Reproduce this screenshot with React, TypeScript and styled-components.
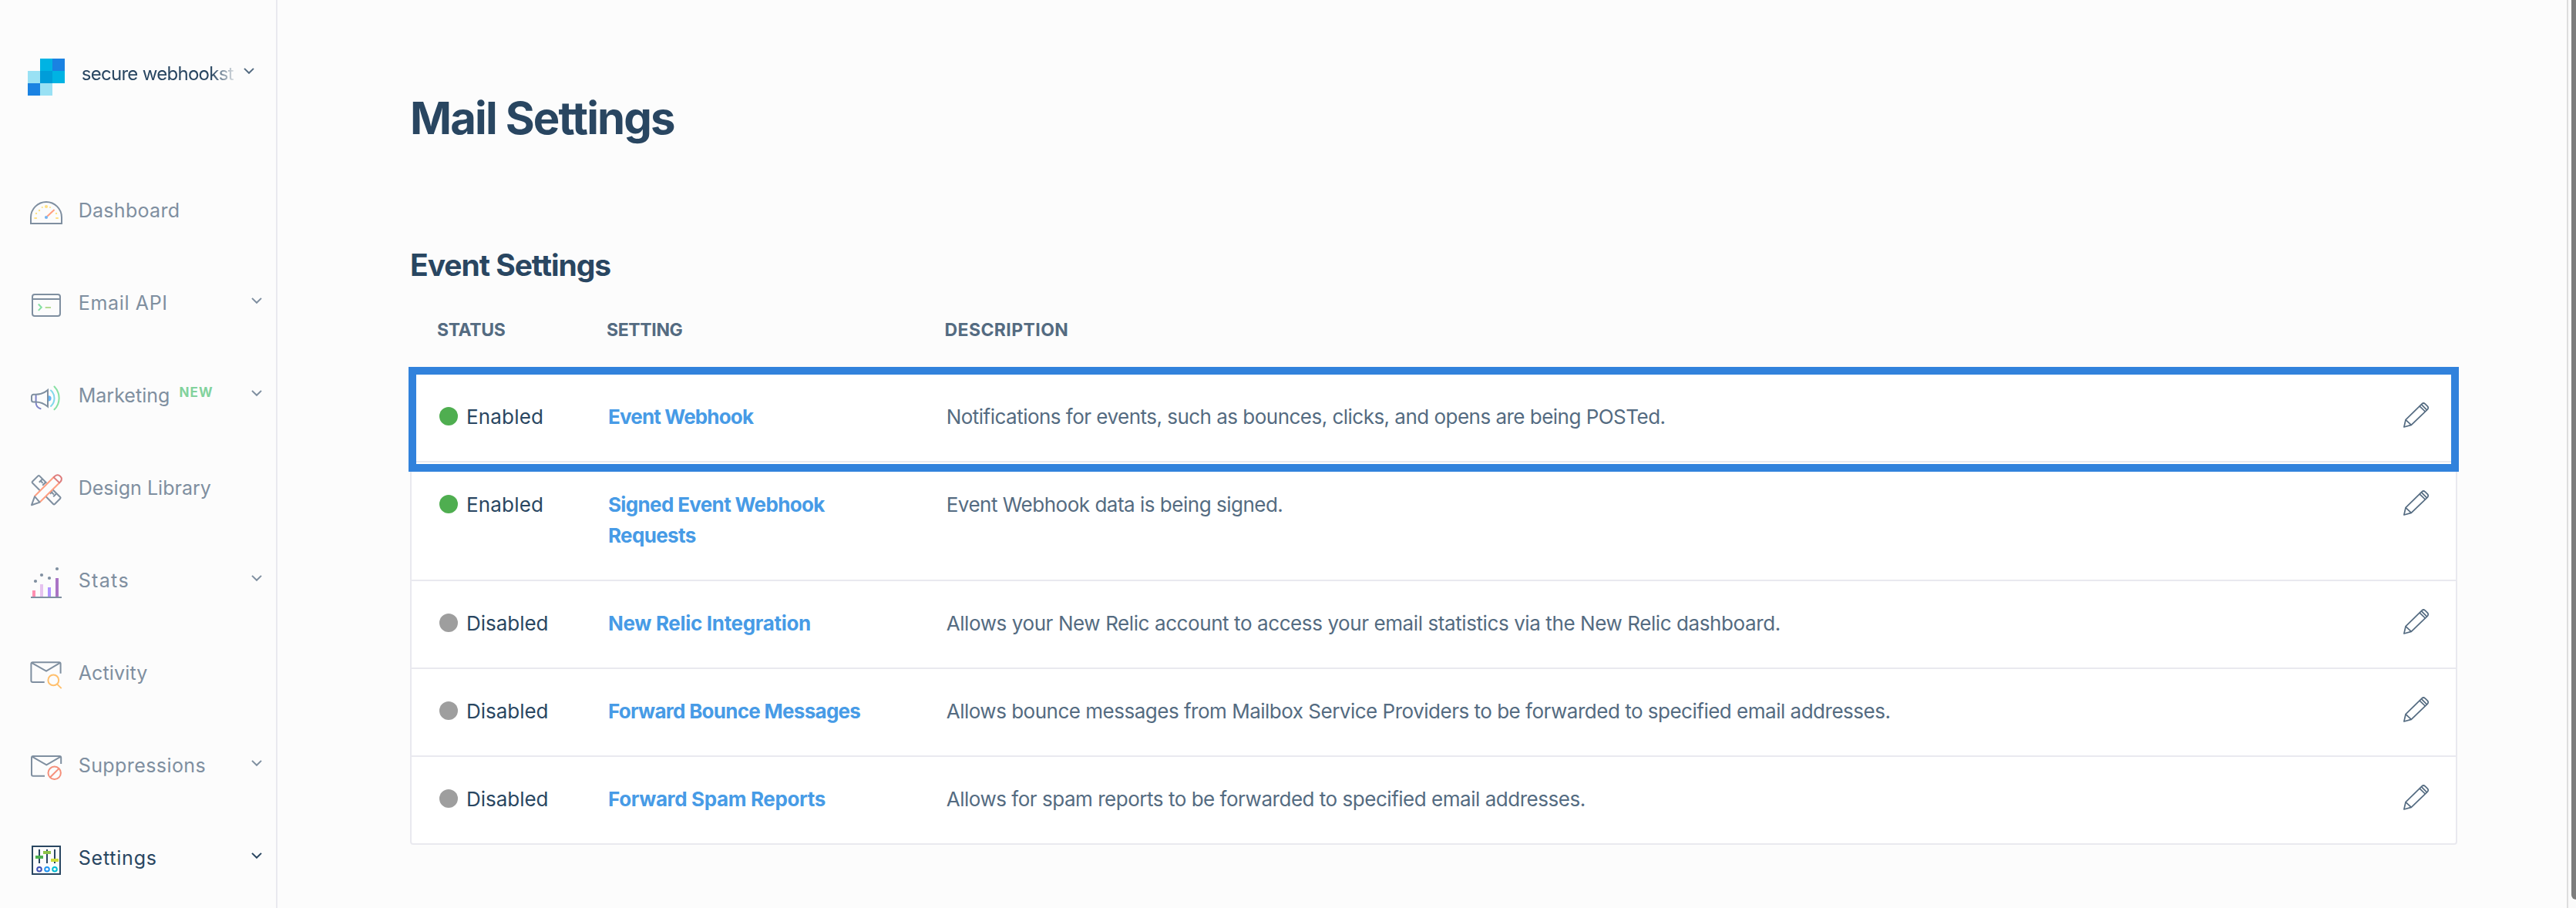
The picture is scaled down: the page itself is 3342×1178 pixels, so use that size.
import React from "react";
import styled, { createGlobalStyle, css } from "styled-components";

const GlobalStyle = createGlobalStyle`
  *, *::before, *::after { box-sizing: border-box; }
  body {
    margin: 0;
    background: #fcfcfc;
    font-family: Inter, "Liberation Sans", sans-serif;
    overflow: hidden;
  }
`;

const navy = "#294661";
const slate = "#546b81";
const muted = "#7f8fa0";
const line = "#e9e9ef";

const Page = styled.div`
  display: flex;
  height: 1178px;
  overflow: hidden;
`;

/* ---------- sidebar ---------- */

const Sidebar = styled.aside`
  width: 360px;
  flex: none;
  border-right: 2px solid ${line};
  display: flex;
  flex-direction: column;
`;

const Brand = styled.div`
  height: 213px;
  flex: none;
  display: flex;
  align-items: flex-start;
  padding: 76px 0 0 36px;
`;

const BrandName = styled.div`
  width: 210.3px;
  margin: 5px 0 0 21.7px;
  font-size: 24px;
  line-height: 29px;
  letter-spacing: -0.71px;
  color: ${navy};
  white-space: nowrap;
  mask-image: linear-gradient(to right, #000 168px, transparent 203px);
`;

const BrandArrow = styled.div`
  display: flex;
  padding-top: 12px;
`;

const Nav = styled.nav`
  display: flex;
  flex-direction: column;
`;

const NavItem = styled.a<{ $active?: boolean }>`
  height: 120px;
  display: flex;
  align-items: center;
  padding: 0 18px 0 36px;
  color: ${(p) => (p.$active ? navy : muted)};
`;

const NavIcon = styled.svg`
  width: 48px;
  height: 48px;
  flex: none;
  margin-top: 6px;
  fill: none;
  stroke: currentColor;
  stroke-width: 2;
`;

const NavLabel = styled.span<{ $track: number }>`
  margin-left: 17.7px;
  font-size: 25px;
  line-height: 30px;
  letter-spacing: ${(p) => p.$track}px;
  white-space: nowrap;
`;

const NewTag = styled.span`
  margin: 0 0 8px 12px;
  font-size: 17px;
  line-height: 20px;
  font-weight: 700;
  letter-spacing: 1.2px;
  color: #82d29c;
`;

const NavArrow = styled.span`
  display: flex;
  margin-left: auto;
  padding-bottom: 6px;
`;

/* ---------- content ---------- */

const Main = styled.main`
  flex: 1;
  padding: 118px 142px 0 172px;
`;

const PageTitle = styled.h1`
  margin: 0 0 132px;
  font-size: 58px;
  line-height: 70px;
  font-weight: 700;
  letter-spacing: -1.85px;
  color: ${navy};
`;

const SectionTitle = styled.h2`
  margin: 0 0 47px;
  font-size: 39px;
  line-height: 47px;
  font-weight: 700;
  letter-spacing: -1.04px;
  color: ${navy};
`;

const HeadRow = styled.div`
  display: grid;
  grid-template-columns: 220px 438.5px 1fr;
  padding: 0 35px;
  margin-bottom: 42px;
`;

const HeadCell = styled.div<{ $track: number }>`
  font-size: 23px;
  line-height: 28px;
  font-weight: 700;
  letter-spacing: ${(p) => p.$track}px;
  color: ${slate};
`;

const Table = styled.div`
  border: 2px solid ${line};
  border-radius: 4px;
  background: #fff;
`;

const Row = styled.div<{ $highlight?: boolean; $last?: boolean }>`
  position: relative;
  display: grid;
  grid-template-columns: 219px 438.7px 1fr 36px;
  align-items: start;
  padding: 34.5px 34px 37.5px 36px;
  ${(p) => !p.$last && css`border-bottom: 2px solid ${line};`}
  ${(p) =>
    p.$highlight &&
    css`
      &::after {
        content: "";
        position: absolute;
        z-index: 1;
        top: -10px;
        left: -4px;
        right: -4px;
        height: 136px;
        border: 10px solid #3182dc;
      }
    `}
`;

const Status = styled.div<{ $track: number }>`
  display: flex;
  align-items: center;
  font-size: 26px;
  line-height: 40px;
  letter-spacing: ${(p) => p.$track}px;
  color: ${navy};
`;

const Dot = styled.span<{ $on: boolean }>`
  width: 24px;
  height: 24px;
  margin: 0 11px 1px 0;
  border-radius: 50%;
  background: ${(p) => (p.$on ? "#4fae50" : "#9e9e9e")};
`;

const SettingLink = styled.a<{ $track: number }>`
  max-width: 360px;
  font-size: 26px;
  line-height: 40px;
  font-weight: 700;
  letter-spacing: ${(p) => p.$track}px;
  color: #479be6;
`;

const Description = styled.div<{ $track: number }>`
  font-size: 26px;
  line-height: 40px;
  letter-spacing: ${(p) => p.$track}px;
  color: ${slate};
  white-space: nowrap;
`;

const EditIcon = styled.svg`
  width: 36px;
  height: 36px;
  margin-top: -0.5px;
  fill: none;
  stroke: ${slate};
  stroke-width: 1.7;
  stroke-linejoin: round;
`;

const ScrollTrack = styled.div`
  width: 12px;
  flex: none;
  padding-left: 4px;
  border-left: 2px solid #dedede;
  background: #fafafa;
`;

const ScrollThumb = styled.div`
  height: 1167px;
  background: #7d7d7d;
  border-bottom-left-radius: 7px;
`;

/* ---------- drawings ---------- */

const Logo = () => (
  <svg width="48" height="48" shapeRendering="crispEdges">
    <path fill="#00b3e3" d="M16 0h16v16H16zM32 16h16v16H32z" />
    <path fill="#1a82e2" d="M32 0h16v16H32zM0 32h16v16H0z" />
    <path fill="#99e1f4" d="M0 16h16v16H0zM16 32h16v16H16z" />
    <path fill="#009dd9" d="M16 16h16v16H16z" />
  </svg>
);

const Chevron = ({ color = "currentColor" }: { color?: string }) => (
  <svg width="14" height="8" fill="none" stroke={color} strokeWidth="2">
    <path d="M1 .9l6 5.9 6-5.9" />
  </svg>
);

const DashboardIcon = () => (
  <NavIcon>
    <path d="M4 38V30a20 20 0 0 1 40 0v8z" />
    <g fill="#ffe082" stroke="none">
      <circle cx="24" cy="16" r="2.1" />
      <circle cx="18.8" cy="17" r="1.1" />
      <circle cx="29" cy="17" r="1.1" />
      <circle cx="15" cy="21" r="1.2" />
      <circle cx="11" cy="24.9" r="1.2" />
      <circle cx="37" cy="24.9" r="1.2" />
      <rect x="8.2" y="30" width="4" height="2" rx="1" />
      <rect x="36" y="30" width="4" height="2" rx="1" />
    </g>
    <path stroke="#ff9e80" d="M25.2 28.8L34.6 20" />
    <circle cx="24" cy="30" r="2.1" fill="#75b4f0" stroke="none" />
  </NavIcon>
);

const ApiIcon = () => (
  <NavIcon>
    <rect x="6" y="10" width="36" height="28" rx="3" />
    <path d="M6 16h36" />
    <path stroke="#86e0a3" d="M13.8 22.5l4 4.2-4 4.2" />
    <path stroke="#b5dc93" d="M22.7 27H30" />
  </NavIcon>
);

const MarketingIcon = () => (
  <NavIcon strokeLinecap="round">
    <path stroke="#7e84c8" d="M10.6 20.5V30c0 4 2.4 7 6 8.2" />
    <path d="M26 14v21.6c-4.5-3.8-9.5-6.2-15.4-6.2H7.500a2.500 2.500 0 0 1-2.500-2.500v-4.600a2.500 2.500 0 0 1 2.500-2.500h3.100C16.500 19.800 21.500 17.800 26 14z" />
    <path fill="#64b5f6" stroke="none" d="M27 21.200a3.600 3.600 0 0 1 0 7.200z" />
    <path stroke="#80d8ea" d="M30 14.500c6 5.400 6 15 0 20.400" />
    <path stroke="#86e0a3" d="M34.500 9.500c8.200 8.400 8.200 21.400 0 29.800" />
  </NavIcon>
);

const DesignIcon = () => (
  <NavIcon strokeLinejoin="round">
    <path d="M16 24.5L6 14.5q-.8-.9 0-1.700l7.400-7.400q.9-.8 1.800 0l9.200 9.300" />
    <path d="M14.800 13.800l4-4M17 11.800l2.500 3.200M19.200 17.800l4-4" />
    <path d="M23.400 32l9.800 10q.9.900 1.800 0l7.200-7.200q.8-.9 0-1.800l-9.800-9.700" />
    <path d="M28.800 28.800l3.400-3.200M31 27l3 2.500M33.200 32.400l3.600-3.600" />
    <path stroke="#ff9e80" d="M8.700 32L33.700 7M15.700 39.500l25.500-25.300" />
    <path stroke="#dd7b7b" d="M33.700 7.200l7.400 7.200 1-1.100c5-5.800-2.200-11.500-7.200-7.400z" />
    <path d="M9 32.200L5 43.200l10.600-3.600z" />
  </NavIcon>
);

const StatsIcon = () => (
  <NavIcon>
    <g stroke="none">
      <path fill="#ff8fb1" d="M6 34h4v8H6z" />
      <path fill="#e6c3ef" d="M16 26h4v16h-4z" />
      <path fill="#ae94ff" d="M26 30h4v12h-4z" />
      <path fill="#aa74c5" d="M36 18h4v24h-4z" />
      <g fill="currentColor">
        <path d="M4 42h40v2H4z" />
        <circle cx="10" cy="22" r="2.1" />
        <circle cx="18" cy="14" r="2.1" />
        <circle cx="28" cy="18" r="2.1" />
        <circle cx="38" cy="6" r="2.1" />
      </g>
    </g>
  </NavIcon>
);

const ActivityIcon = () => (
  <NavIcon>
    <path d="M21.7 33H6.400a2 2 0 0 1-2-2V9.200a2 2 0 0 1 2-2h34.200a2 2 0 0 1 2 2v12.600" />
    <path d="M5 7.800l19 10.700 18-10.700" />
    <circle cx="33.3" cy="30.4" r="6.9" stroke="#ffc06e" />
    <path stroke="#ffc06e" d="M38.200 35.600l5.500 5.500" />
  </NavIcon>
);

const SuppressionsIcon = () => (
  <NavIcon>
    <path d="M22 34.800H7a2 2 0 0 1-2-2V11a2 2 0 0 1 2-2h34.200a2 2 0 0 1 2 2v8" />
    <path d="M5.600 9.600l18.700 10.700L42.800 9.600" />
    <circle cx="34.7" cy="30.8" r="8.2" stroke="#f58f7a" />
    <path stroke="#f58f7a" d="M29 36.500l11.400-11.400" />
  </NavIcon>
);

const SettingsIcon = () => (
  <NavIcon>
    <rect x="6" y="6" width="36" height="36" />
    <path d="M15 10v18M25 10v18M35 10v18" />
    <g stroke="none">
      <path fill="#4caf50" d="M10 18h10v4H10z" />
      <path fill="#8bc34a" d="M20 12h10v4H20z" />
      <path fill="#cddc39" d="M30 22h10v4H30z" />
    </g>
    <circle cx="15" cy="35.7" r="2.8" stroke="#3f51b5" />
    <circle cx="25" cy="35.7" r="2.8" stroke="#2196f3" />
    <circle cx="35" cy="35.7" r="2.8" stroke="#00bcd4" />
  </NavIcon>
);

const Pencil = () => (
  <EditIcon>
    <path d="M5 24.700L26.200 3.800q1.900-1.600 3.900 0l3.300 3.300q1.700 2 0 4L12.300 31.400 2.900 34z" />
    <path d="M5 24.700l7.300 6.700M23 6.800l7.400 7.200M25.300 4.700l7.200 7.200" />
  </EditIcon>
);

/* ---------- data ---------- */

const navItems = [
  { label: "Dashboard", track: 0.3, Icon: DashboardIcon },
  { label: "Email API", track: 0.67, Icon: ApiIcon, arrow: true },
  { label: "Marketing", track: 0.02, Icon: MarketingIcon, arrow: true, isNew: true },
  { label: "Design Library", track: 0.03, Icon: DesignIcon },
  { label: "Stats", track: 1.35, Icon: StatsIcon, arrow: true },
  { label: "Activity", track: 0.15, Icon: ActivityIcon },
  { label: "Suppressions", track: 0.42, Icon: SuppressionsIcon, arrow: true },
  { label: "Settings", track: 0.8, Icon: SettingsIcon, arrow: true, active: true },
];

const settings = [
  { on: true, name: "Event Webhook", track: -0.83, text: "Notifications for events, such as bounces, clicks, and opens are being POSTed.", textTrack: -0.519 },
  { on: true, name: "Signed Event Webhook Requests", track: -0.65, text: "Event Webhook data is being signed.", textTrack: -0.491 },
  { on: false, name: "New Relic Integration", track: -0.32, text: "Allows your New Relic account to access your email statistics via the New Relic dashboard.", textTrack: -0.41 },
  { on: false, name: "Forward Bounce Messages", track: -0.72, text: "Allows bounce messages from Mailbox Service Providers to be forwarded to specified email addresses.", textTrack: -0.495 },
  { on: false, name: "Forward Spam Reports", track: -0.355, text: "Allows for spam reports to be forwarded to specified email addresses.", textTrack: -0.475 },
];

export default function App() {
  return (
    <Page>
      <GlobalStyle />
      <Sidebar>
        <Brand>
          <Logo />
          <BrandName>secure webhookst</BrandName>
          <BrandArrow>
            <Chevron color={slate} />
          </BrandArrow>
        </Brand>
        <Nav>
          {navItems.map(({ label, track, Icon, arrow, isNew, active }) => (
            <NavItem key={label} $active={active}>
              <Icon />
              <NavLabel $track={track}>{label}</NavLabel>
              {isNew && <NewTag>NEW</NewTag>}
              {arrow && (
                <NavArrow>
                  <Chevron />
                </NavArrow>
              )}
            </NavItem>
          ))}
        </Nav>
      </Sidebar>
      <Main>
        <PageTitle>Mail Settings</PageTitle>
        <SectionTitle>Event Settings</SectionTitle>
        <HeadRow>
          <HeadCell $track={-0.4}>STATUS</HeadCell>
          <HeadCell $track={-0.35}>SETTING</HeadCell>
          <HeadCell $track={0.42}>DESCRIPTION</HeadCell>
        </HeadRow>
        <Table>
          {settings.map((s, i) => (
            <Row key={s.name} $highlight={i === 0} $last={i === settings.length - 1}>
              <Status $track={s.on ? 0.17 : -0.02}>
                <Dot $on={s.on} />
                {s.on ? "Enabled" : "Disabled"}
              </Status>
              <SettingLink $track={s.track}>{s.name}</SettingLink>
              <Description $track={s.textTrack}>{s.text}</Description>
              <Pencil />
            </Row>
          ))}
        </Table>
      </Main>
      <ScrollTrack>
        <ScrollThumb />
      </ScrollTrack>
    </Page>
  );
}
